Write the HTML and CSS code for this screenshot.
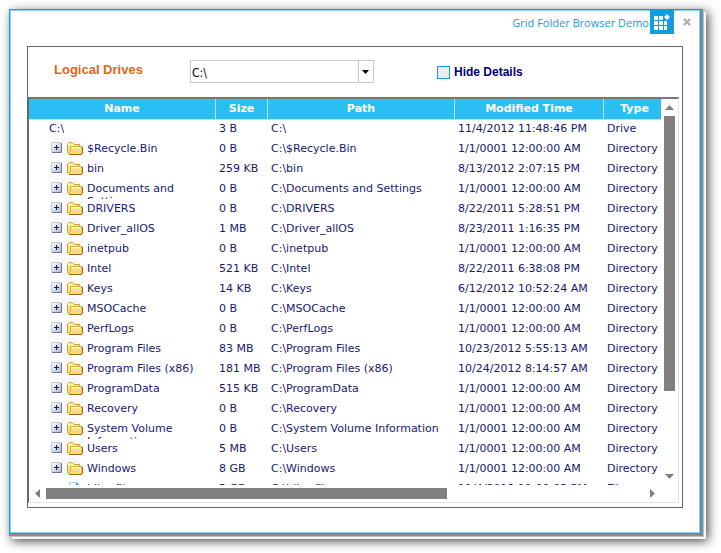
FILE: index.html
```html
<!DOCTYPE html>
<html lang="en">
<head>
<meta charset="utf-8">
<title>Grid Folder Browser Demo</title>
<link rel="stylesheet" href="styles.css">
</head>
<body>
<svg width="0" height="0" class="sprites" aria-hidden="true">
  <defs>
    <linearGradient id="gold" x1="0" y1="0" x2="0" y2="1"><stop offset="0" stop-color="#fffcae"/><stop offset="1" stop-color="#fbd858"/></linearGradient>
    <linearGradient id="steel" x1="0" y1="0" x2="1" y2="1"><stop offset="0" stop-color="#ffffff"/><stop offset="1" stop-color="#a9b9d3"/></linearGradient>
    <symbol id="folder" viewBox="0 0 16 13">
      <path d="M.5 10.500V2.500L2.500.5H5.500L7.500 2.500H12.500V5.500H15V11.500L14 12.500H2.500z" fill="url(#gold)" stroke="#cf9a30"/>
      <path d="M3.500 5V9.500L1.500 11.500" fill="none" stroke="#d9a73a"/>
      <path d="M3 4.500H15" stroke="#d9a73a"/>
      <path d="M4 5.500H14" stroke="#fffde0"/>
      <path d="M5 7H13V10H5z" fill="#ffd29e"/>
      <path d="M15.500 5V11.500M2 12.500H15" fill="none" stroke="#a8642a"/>
    </symbol>
    <symbol id="plus" viewBox="0 0 11 11">
      <path d="M.5.5H10.500V10.500H.5z" fill="url(#steel)" stroke="#c8ccd4"/>
      <path d="M1 10.500H10.500V1" fill="none" stroke="#7474a0"/>
      <path d="M3 5.500H8M5.500 3V8" stroke="#20204c"/>
    </symbol>
    <symbol id="file" viewBox="0 0 16 13">
      <path d="M2.500 12.500V.5H9.500L13.500 4.500V12.500z" fill="#eef6ff" stroke="#a9cbea"/>
      <path d="M9 0L14 5H9z" fill="#4292d2"/>
    </symbol>
  </defs>
</svg>
<main class="window">
  <header class="titlebar">
    <h1>Grid Folder Browser Demo</h1>
    <svg class="logo" viewBox="0 0 24 24" aria-hidden="true"><path fill="#149bda" d="M0 0h24v24H0z"/><path fill="#fff" d="M4 6h4v4H4zM9 6h4v4H9zM4 11h4v4H4zM9 11h4v4H9zM14 11h3v4h-3zM4 16h4v4H4zM9 16h4v4H9zM14 16h3v4h-3zM17 4l3 3-3 3-3-3z"/></svg>
    <button class="close" type="button" aria-label="Close"><svg viewBox="0 0 8 8"><path d="M1 1L7 7M7 1L1 7" stroke="#aaa" stroke-width="2"/></svg></button>
  </header>
  <section class="panel">
    <form class="toolbar">
      <label class="drives" for="drive">Logical Drives</label>
      <div class="combo">
        <select id="drive"><option>C:\</option></select>
        <svg viewBox="0 0 15 21" aria-hidden="true"><path d="M.5 0V21" stroke="#c8c8c8"/><path d="M4 9H11L7.500 13z"/></svg>
      </div>
      <label class="details" for="hide"><input id="hide" type="checkbox">Hide Details</label>
    </form>
    <div class="grid">
      <div class="viewport">
        <table>
          <colgroup><col class="c-name"><col class="c-size"><col><col class="c-time"><col class="c-type"></colgroup>
          <thead><tr><th>Name</th><th>Size</th><th>Path</th><th>Modified Time</th><th>Type</th></tr></thead>
          <tbody id="rows"></tbody>
        </table>
      </div>
      <div class="vscroll">
        <button type="button" aria-label="Scroll up"><svg viewBox="0 0 9 5"><path d="M0 5L4.500 0L9 5z"/></svg></button>
        <div class="track"><div class="thumb"></div></div>
        <button type="button" aria-label="Scroll down"><svg viewBox="0 0 9 5"><path d="M0 0H9L4.500 5z"/></svg></button>
      </div>
      <div class="hscroll">
        <button type="button" aria-label="Scroll left"><svg viewBox="0 0 5 9"><path d="M5 0V9L0 4.500z"/></svg></button>
        <div class="track"><div class="thumb"></div></div>
        <button type="button" aria-label="Scroll right"><svg viewBox="0 0 5 9"><path d="M0 0V9L5 4.500z"/></svg></button>
      </div>
    </div>
  </section>
</main>
<script src="app.js"></script>
</body>
</html>
```
FILE: styles.css
```css
* { box-sizing: border-box; }
body { margin: 0; padding: 9px 14px 14px 9px; background: #fff; font-family: "DejaVu Sans", Verdana, sans-serif; font-size: 11px; color: #191970; }
.sprites { position: absolute; }
button { padding: 0; border: 0; background: none; display: flex; align-items: center; justify-content: center; }
.window { margin: 0 6px 5px 0; border: 1px solid #149bda; background: #fff; padding: 0 17px 25px;
  box-shadow: inset 0 0 0 1px #8fd4f2, 1px 1px 0 1px #8c8c8c, 2px 2px 0 1px #c0bfc3, 4px 4px 0 1px #f6f6f6, 5px 5px 10px 2px #444; }
.titlebar { display: flex; align-items: flex-start; justify-content: flex-end; height: 36px; }
h1 { margin: 3px 1px 0 0; font: 11px/20px "Open Sans", "Segoe UI", sans-serif; color: #149bda; }
.logo { width: 24px; height: 24px; }
.close { width: 8px; height: 24px; margin: 0 -8px 0 9px; }
.close svg { width: 8px; height: 8px; }
.panel { border: 1px solid #666; padding: 0 3px 4px 0; }
.toolbar { display: flex; align-items: flex-start; height: 50px; padding: 13px 0 0 26px; font-family: "Liberation Sans", Arial, sans-serif; font-weight: bold; }
.drives { width: 136px; font-size: 13px; line-height: 20px; color: #e2661a; }
.combo { display: flex; width: 184px; height: 23px; border: 1px solid #c8c8c8; }
.combo select { flex: 1; min-width: 0; appearance: none; border: 0; background: #fff; padding: 2px 0 0 1px; font: 12px "DejaVu Sans Condensed", Tahoma, sans-serif; color: #000; }
.combo svg { width: 15px; height: 21px; }
.details { display: flex; align-items: center; gap: 4px; margin: 4px 0 0 63px; font-size: 12px; line-height: 16px; color: #000080; }
.details input { appearance: none; width: 13px; height: 13px; margin: 0; border: 1px solid #149bda; background: #ececec; }
.grid { display: grid; grid-template: 386px 17px / minmax(0, 1fr) 17px; border: 1px solid #666; border-top: 2px solid #777; border-right-color: #e3e3e3; border-bottom-color: #e3e3e3; }
.viewport { overflow: hidden; }
table { width: 100%; table-layout: fixed; border-spacing: 0; }
.c-name { width: 187px; }
.c-size { width: 52px; }
.c-time { width: 149px; }
.c-type { width: 57px; }
th { height: 21px; padding: 0; background: #2abff2; color: #fff; line-height: 20px; border-right: 1px solid #c8dfe8; border-bottom: 1px solid #c8dfe8; }
th:last-child { border-right: 0; padding-left: 4px; }
td { height: 20px; padding: 0 0 0 3px; white-space: nowrap; vertical-align: top; }
td:last-child { overflow: hidden; }
.line { display: block; height: 19px; line-height: 13px; padding-top: 2px; overflow: hidden; }
.node { display: flex; height: 20px; padding-left: 19px; }
.root { padding-left: 17px; }
.plus { flex: none; width: 11px; height: 11px; margin: 2px 5px 0 0; }
.pic { flex: none; width: 16px; height: 13px; margin: 2px 4px 0 0; }
.gap { flex: none; width: 16px; }
.node .line { white-space: normal; }
button svg { fill: #808080; }
.vscroll { display: flex; flex-direction: column; }
.hscroll { display: flex; padding-top: 3px; }
.track { flex: 1; }
.thumb { background: #808080; }
.vscroll button { width: 17px; height: 17px; }
.vscroll button svg { width: 9px; height: 5px; }
.vscroll .thumb { width: 11px; height: 78%; margin-left: 3px; }
.hscroll button { width: 17px; height: 11px; }
.hscroll button svg { width: 5px; height: 9px; }
.hscroll .thumb { height: 11px; width: 67%; }
```
FILE: app.js
```js
const never = "1/1/0001 12:00:00 AM";
const entries = [
  ["$Recycle.Bin", "0 B", never], ["bin", "259 KB", "8/13/2012 2:07:15 PM"],
  ["Documents and Settings", "0 B", never], ["DRIVERS", "0 B", "8/22/2011 5:28:51 PM"],
  ["Driver_allOS", "1 MB", "8/23/2011 1:16:35 PM"], ["inetpub", "0 B", never],
  ["Intel", "521 KB", "8/22/2011 6:38:08 PM"], ["Keys", "14 KB", "6/12/2012 10:52:24 AM"],
  ["MSOCache", "0 B", never], ["PerfLogs", "0 B", never],
  ["Program Files", "83 MB", "10/23/2012 5:55:13 AM"], ["Program Files (x86)", "181 MB", "10/24/2012 8:14:57 AM"],
  ["ProgramData", "515 KB", never], ["Recovery", "0 B", never],
  ["System Volume Information", "0 B", never], ["Users", "5 MB", never], ["Windows", "8 GB", never],
  ["hiberfil.sys", "3 GB", "11/4/2012 11:00:03 PM", "File"]
];
const cell = t => `<td><span class="line">${t}</span></td>`;
const row = (name, rest) => `<tr><td>${name}</td>${rest.map(cell).join("")}</tr>`;
const icon = (cls, id) => `<svg class="${cls}" aria-hidden="true"><use href="#${id}"/></svg>`;
let html = row('<div class="node root"><span class="line">C:\\</span></div>', ["3 B", "C:\\", "11/4/2012 11:48:46 PM", "Drive"]);
for (const [name, size, time, type = "Directory"] of entries) {
  const icons = type === "File" ? '<span class="gap"></span>' + icon("pic", "file") : icon("plus", "plus") + icon("pic", "folder");
  html += row(`<div class="node">${icons}<span class="line">${name}</span></div>`, [size, "C:\\" + name, time, type]);
}
document.getElementById("rows").innerHTML = html;
```
